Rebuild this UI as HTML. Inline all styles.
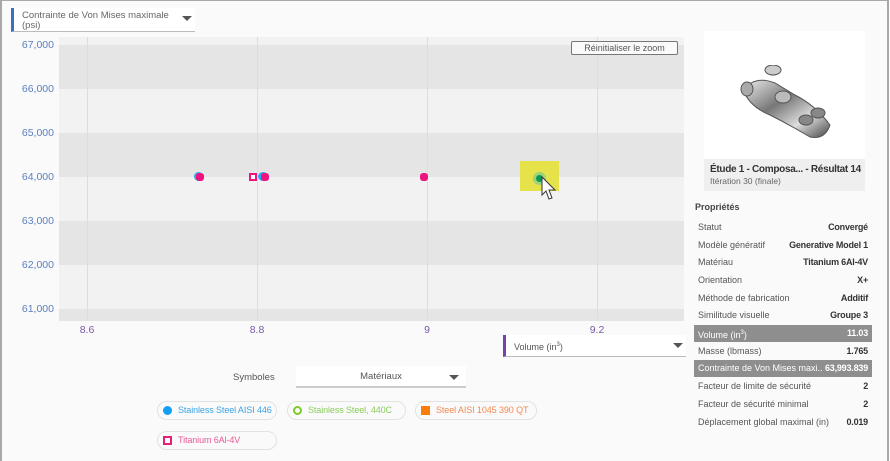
<!DOCTYPE html><html><head><style>
*{box-sizing:border-box;margin:0;padding:0}
body{width:890px;height:461px;overflow:hidden;background:#fafafa;font-family:"Liberation Sans",sans-serif;position:relative}
.frame{position:absolute;left:0;top:0;width:889px;height:461px;border:2px solid #a8a8a8;border-top:1px solid #a8a8a8;border-bottom:none}
.abs{position:absolute;white-space:nowrap}
.dd{position:absolute;background:#fff;border-bottom:1px solid #bbb;white-space:nowrap}
.tri{position:absolute;width:0;height:0;border-left:5px solid transparent;border-right:5px solid transparent;border-top:5px solid #555}
.ylab{position:absolute;left:0;width:54px;text-align:right;font-size:10.5px;color:#5a7fc0}
.xlab{position:absolute;font-size:10.5px;color:#7a5aa8;width:40px;text-align:center}
.row{position:absolute;left:694px;width:178px;height:17px;font-size:9px;color:#555;padding:0 4px;line-height:17px;white-space:nowrap;overflow:hidden}
.row b{position:absolute;right:4px;color:#333;letter-spacing:-0.2px}
.row.h{background:#8e8e8e;color:#fff}.row.h b{color:#fff;background:#8e8e8e;padding-left:3px}
.pill{position:absolute;height:19px;border:1px solid #e2e2e2;border-radius:10px;background:#fafafa;font-size:9px;line-height:17px;padding-left:20px;white-space:nowrap;letter-spacing:-0.1px}
</style></head><body>
<div class="frame"></div>
<div class="dd" style="left:11px;top:8px;width:184px;height:24px;border-left:3px solid #3a6fc4;font-size:9.5px;color:#666;padding:3px 0 0 8px;line-height:10px">Contrainte de Von Mises maximale<br>(psi)<div class="tri" style="left:168px;top:8px"></div></div>
<div class="abs" style="left:59px;top:37px;width:625px;height:284px;background:#f2f2f2">
<div class="abs" style="left:0;top:8px;width:625px;height:44px;background:#e5e5e5"></div>
<div class="abs" style="left:0;top:96px;width:625px;height:44px;background:#e5e5e5"></div>
<div class="abs" style="left:0;top:184px;width:625px;height:44px;background:#e5e5e5"></div>
<div class="abs" style="left:0;top:272px;width:625px;height:12px;background:#e5e5e5"></div>
<div class="abs" style="left:28px;top:0;width:1px;height:284px;background:#ddd"></div>
<div class="abs" style="left:198px;top:0;width:1px;height:284px;background:#ddd"></div>
<div class="abs" style="left:368px;top:0;width:1px;height:284px;background:#ddd"></div>
<div class="abs" style="left:538px;top:0;width:1px;height:284px;background:#ddd"></div>
</div>
<div class="ylab" style="top:39px">67,000</div><div class="ylab" style="top:83px">66,000</div><div class="ylab" style="top:127px">65,000</div><div class="ylab" style="top:171px">64,000</div><div class="ylab" style="top:215px">63,000</div><div class="ylab" style="top:259px">62,000</div><div class="ylab" style="top:303px">61,000</div>
<div class="xlab" style="left:67px;top:324px">8.6</div><div class="xlab" style="left:237px;top:324px">8.8</div><div class="xlab" style="left:407px;top:324px">9</div><div class="xlab" style="left:577px;top:324px">9.2</div>
<div class="abs" style="left:571px;top:41px;width:107px;height:14px;border:1px solid #777;border-radius:2px;background:#fafafa;font-size:9px;color:#555;text-align:center;line-height:12px">Réinitialiser le zoom</div>
<div class="abs" style="left:194px;top:172px;width:9px;height:9px;border-radius:50%;background:#2aa9f0"></div>
<div class="abs" style="left:196px;top:173px;width:8px;height:8px;border-radius:3px;background:#f0137f"></div>
<div class="abs" style="left:249px;top:173px;width:8px;height:8px;border:2px solid #f0137f;background:#fff"></div>
<div class="abs" style="left:258px;top:172px;width:10px;height:9px;border-radius:50%;background:#2aa9f0"></div>
<div class="abs" style="left:261px;top:173px;width:8px;height:8px;border-radius:3px;background:#f0137f"></div>
<div class="abs" style="left:420px;top:173px;width:8px;height:8px;border-radius:3px;background:#f0137f"></div>
<div class="abs" style="left:520px;top:161px;width:39px;height:30px;background:#e6e24a"></div>
<div class="abs" style="left:533px;top:172px;width:13px;height:13px;border-radius:50%;background:#9bd27a"></div>
<div class="abs" style="left:536px;top:175px;width:7px;height:7px;border-radius:50%;background:#0a9a55"></div>
<svg class="abs" style="left:541px;top:176px" width="20" height="28"><path d="M1 1 L1 19 L5 15 L8 23 L11 22 L8 14 L14 14 Z" fill="#fff" stroke="#333" stroke-width="1"/></svg>
<div class="dd" style="left:503px;top:335px;width:183px;height:22px;border-left:3px solid #7a3fa8;font-size:9px;color:#555;padding-left:8px;line-height:20px">Volume (in<sup style="font-size:6px">3</sup>)<div class="tri" style="left:167px;top:8px"></div></div>
<div class="abs" style="left:233px;top:372px;font-size:9.5px;color:#555">Symboles</div>
<div class="dd" style="left:296px;top:366px;width:170px;height:22px;font-size:9.5px;color:#555;text-align:center;line-height:21px;border-bottom:2px solid #ccc">Matériaux<div class="tri" style="left:153px;top:9px"></div></div>
<div class="pill" style="left:157px;top:401px;width:120px;color:#3aa4e8"><span class="abs" style="left:5px;top:4px;width:9px;height:9px;border-radius:50%;background:#12a0f5"></span>Stainless Steel AISI 446</div>
<div class="pill" style="left:287px;top:401px;width:119px;color:#8acd5a"><span class="abs" style="left:5px;top:4px;width:9px;height:9px;border-radius:50%;border:2px solid #7ccb2e"></span>Stainless Steel, 440C</div>
<div class="pill" style="left:415px;top:401px;width:122px;color:#f28a50"><span class="abs" style="left:5px;top:4px;width:9px;height:9px;background:#fb7d0a"></span>Steel AISI 1045 390 QT</div>
<div class="pill" style="left:157px;top:431px;width:120px;color:#e85a95"><span class="abs" style="left:5px;top:4px;width:9px;height:9px;border:2px solid #e6207a"></span>Titanium 6Al-4V</div>
<div class="abs" style="left:704px;top:31px;width:161px;height:160px;background:#fff"></div>
<svg class="abs" style="left:735px;top:65px" width="110" height="80"><defs><linearGradient id="g" x1="0" y1="0" x2="1" y2="1"><stop offset="0" stop-color="#eee"/><stop offset=".4" stop-color="#777"/><stop offset=".7" stop-color="#ddd"/><stop offset="1" stop-color="#444"/></linearGradient></defs><g stroke="#555" stroke-width="1"><path d="M8 25 Q20 10 40 18 L60 30 Q80 40 95 60 Q90 75 75 72 Q55 60 35 50 Q15 42 8 25Z" fill="url(#g)"/><ellipse cx="38" cy="5" rx="8" ry="5" fill="#ccc"/><ellipse cx="83" cy="48" rx="7" ry="5" fill="#888"/><ellipse cx="71" cy="55" rx="7" ry="5" fill="#888"/><ellipse cx="12" cy="24" rx="6" ry="7" fill="#aaa"/><ellipse cx="48" cy="32" rx="8" ry="6" fill="#bbb"/></g></svg>
<div class="abs" style="left:704px;top:159px;width:161px;height:32px;background:#efefef;padding:5px 0 0 6px"><div style="font-size:10px;font-weight:bold;color:#333;letter-spacing:-0.3px">Étude 1 - Composa... - Résultat 14</div><div style="font-size:8.5px;color:#666;margin-top:1px">Itération 30 (finale)</div></div>
<div class="abs" style="left:695px;top:202px;font-size:9px;font-weight:bold;color:#444">Propriétés</div>
<div class="row" style="top:219px">Statut<b>Convergé</b></div>
<div class="row" style="top:237px">Modèle génératif<b>Generative Model 1</b></div>
<div class="row" style="top:254px">Matériau<b>Titanium 6Al-4V</b></div>
<div class="row" style="top:272px">Orientation<b>X+</b></div>
<div class="row" style="top:290px">Méthode de fabrication<b>Additif</b></div>
<div class="row" style="top:307px">Similitude visuelle<b>Groupe 3</b></div>
<div class="row h" style="top:325px">Volume (in<sup style="font-size:6px">3</sup>)<b>11.03</b></div>
<div class="row" style="top:343px">Masse (lbmass)<b>1.765</b></div>
<div class="row h" style="top:360px">Contrainte de Von Mises maxi...<b>63,993.839</b></div>
<div class="row" style="top:378px">Facteur de limite de sécurité<b>2</b></div>
<div class="row" style="top:396px">Facteur de sécurité minimal<b>2</b></div>
<div class="row" style="top:414px">Déplacement global maximal (in)<b>0.019</b></div>
</body></html>
